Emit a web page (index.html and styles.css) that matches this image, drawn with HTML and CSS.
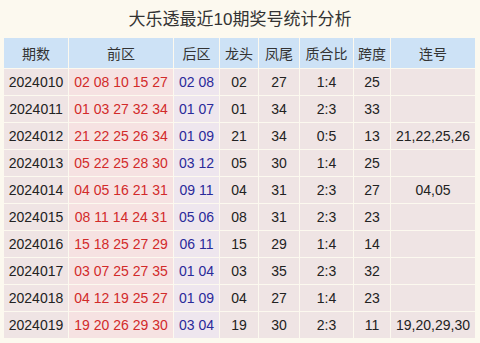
FILE: index.html
```html
<!DOCTYPE html>
<html lang="zh">
<head>
<meta charset="utf-8">
<link rel="stylesheet" href="styles.css">
</head>
<body>
<div class="page">
  <h1 class="title">大乐透最近10期奖号统计分析</h1>
  <table class="stats">
    <colgroup>
      <col class="c1"><col class="c2"><col class="c3"><col class="c4"><col class="c5"><col class="c6"><col class="c7"><col class="c8">
    </colgroup>
    <thead>
      <tr><th>期数</th><th>前区</th><th>后区</th><th>龙头</th><th>凤尾</th><th>质合比</th><th>跨度</th><th>连号</th></tr>
    </thead>
    <tbody>
      <tr><td>2024010</td><td class="red">02 08 10 15 27</td><td class="blue">02 08</td><td>02</td><td>27</td><td>1:4</td><td>25</td><td></td></tr>
      <tr><td>2024011</td><td class="red">01 03 27 32 34</td><td class="blue">01 07</td><td>01</td><td>34</td><td>2:3</td><td>33</td><td></td></tr>
      <tr><td>2024012</td><td class="red">21 22 25 26 34</td><td class="blue">01 09</td><td>21</td><td>34</td><td>0:5</td><td>13</td><td>21,22,25,26</td></tr>
      <tr><td>2024013</td><td class="red">05 22 25 28 30</td><td class="blue">03 12</td><td>05</td><td>30</td><td>1:4</td><td>25</td><td></td></tr>
      <tr><td>2024014</td><td class="red">04 05 16 21 31</td><td class="blue">09 11</td><td>04</td><td>31</td><td>2:3</td><td>27</td><td>04,05</td></tr>
      <tr><td>2024015</td><td class="red">08 11 14 24 31</td><td class="blue">05 06</td><td>08</td><td>31</td><td>2:3</td><td>23</td><td></td></tr>
      <tr><td>2024016</td><td class="red">15 18 25 27 29</td><td class="blue">06 11</td><td>15</td><td>29</td><td>1:4</td><td>14</td><td></td></tr>
      <tr><td>2024017</td><td class="red">03 07 25 27 35</td><td class="blue">01 04</td><td>03</td><td>35</td><td>2:3</td><td>32</td><td></td></tr>
      <tr><td>2024018</td><td class="red">04 12 19 25 27</td><td class="blue">01 09</td><td>04</td><td>27</td><td>1:4</td><td>23</td><td></td></tr>
      <tr><td>2024019</td><td class="red">19 20 26 29 30</td><td class="blue">03 04</td><td>19</td><td>30</td><td>2:3</td><td>11</td><td>19,20,29,30</td></tr>
    </tbody>
  </table>
</div>
</body>
</html>
```
FILE: styles.css
```css
html, body {
  margin: 0;
  padding: 0;
  background: #fcf9ef;
}
.page {
  width: 480px;
  height: 343px;
  padding: 0 4px;
  box-sizing: border-box;
  font-family: "Liberation Sans", "Noto Sans CJK SC", sans-serif;
  color: #222;
}
.title {
  margin: 0;
  height: 38px;
  line-height: 40px;
  font-size: 17px;
  font-weight: normal;
  text-align: center;
  color: #333;
}
.stats {
  width: 472px;
  table-layout: fixed;
  border-collapse: separate;
  border-spacing: 1px;
  margin: -1px 0 0 -1px;
  font-size: 14px;
}
.c1 { width: 64px; }
.c2 { width: 104px; }
.c3 { width: 45px; }
.c4 { width: 38px; }
.c5 { width: 40px; }
.c6 { width: 53px; }
.c7 { width: 36px; }
.c8 { width: 84px; }
.stats th {
  height: 30px;
  padding: 0;
  background: #cde2f6;
  font-weight: normal;
  color: #333;
}
.stats td {
  height: 26px;
  padding: 0;
  text-align: center;
  background: #efe4e4;
  white-space: nowrap;
}
.stats td.red {
  color: #d22a2a;
  background: #f6e2e2;
}
.stats td.blue {
  color: #2a2a9a;
  background: #eee6ee;
}
```
